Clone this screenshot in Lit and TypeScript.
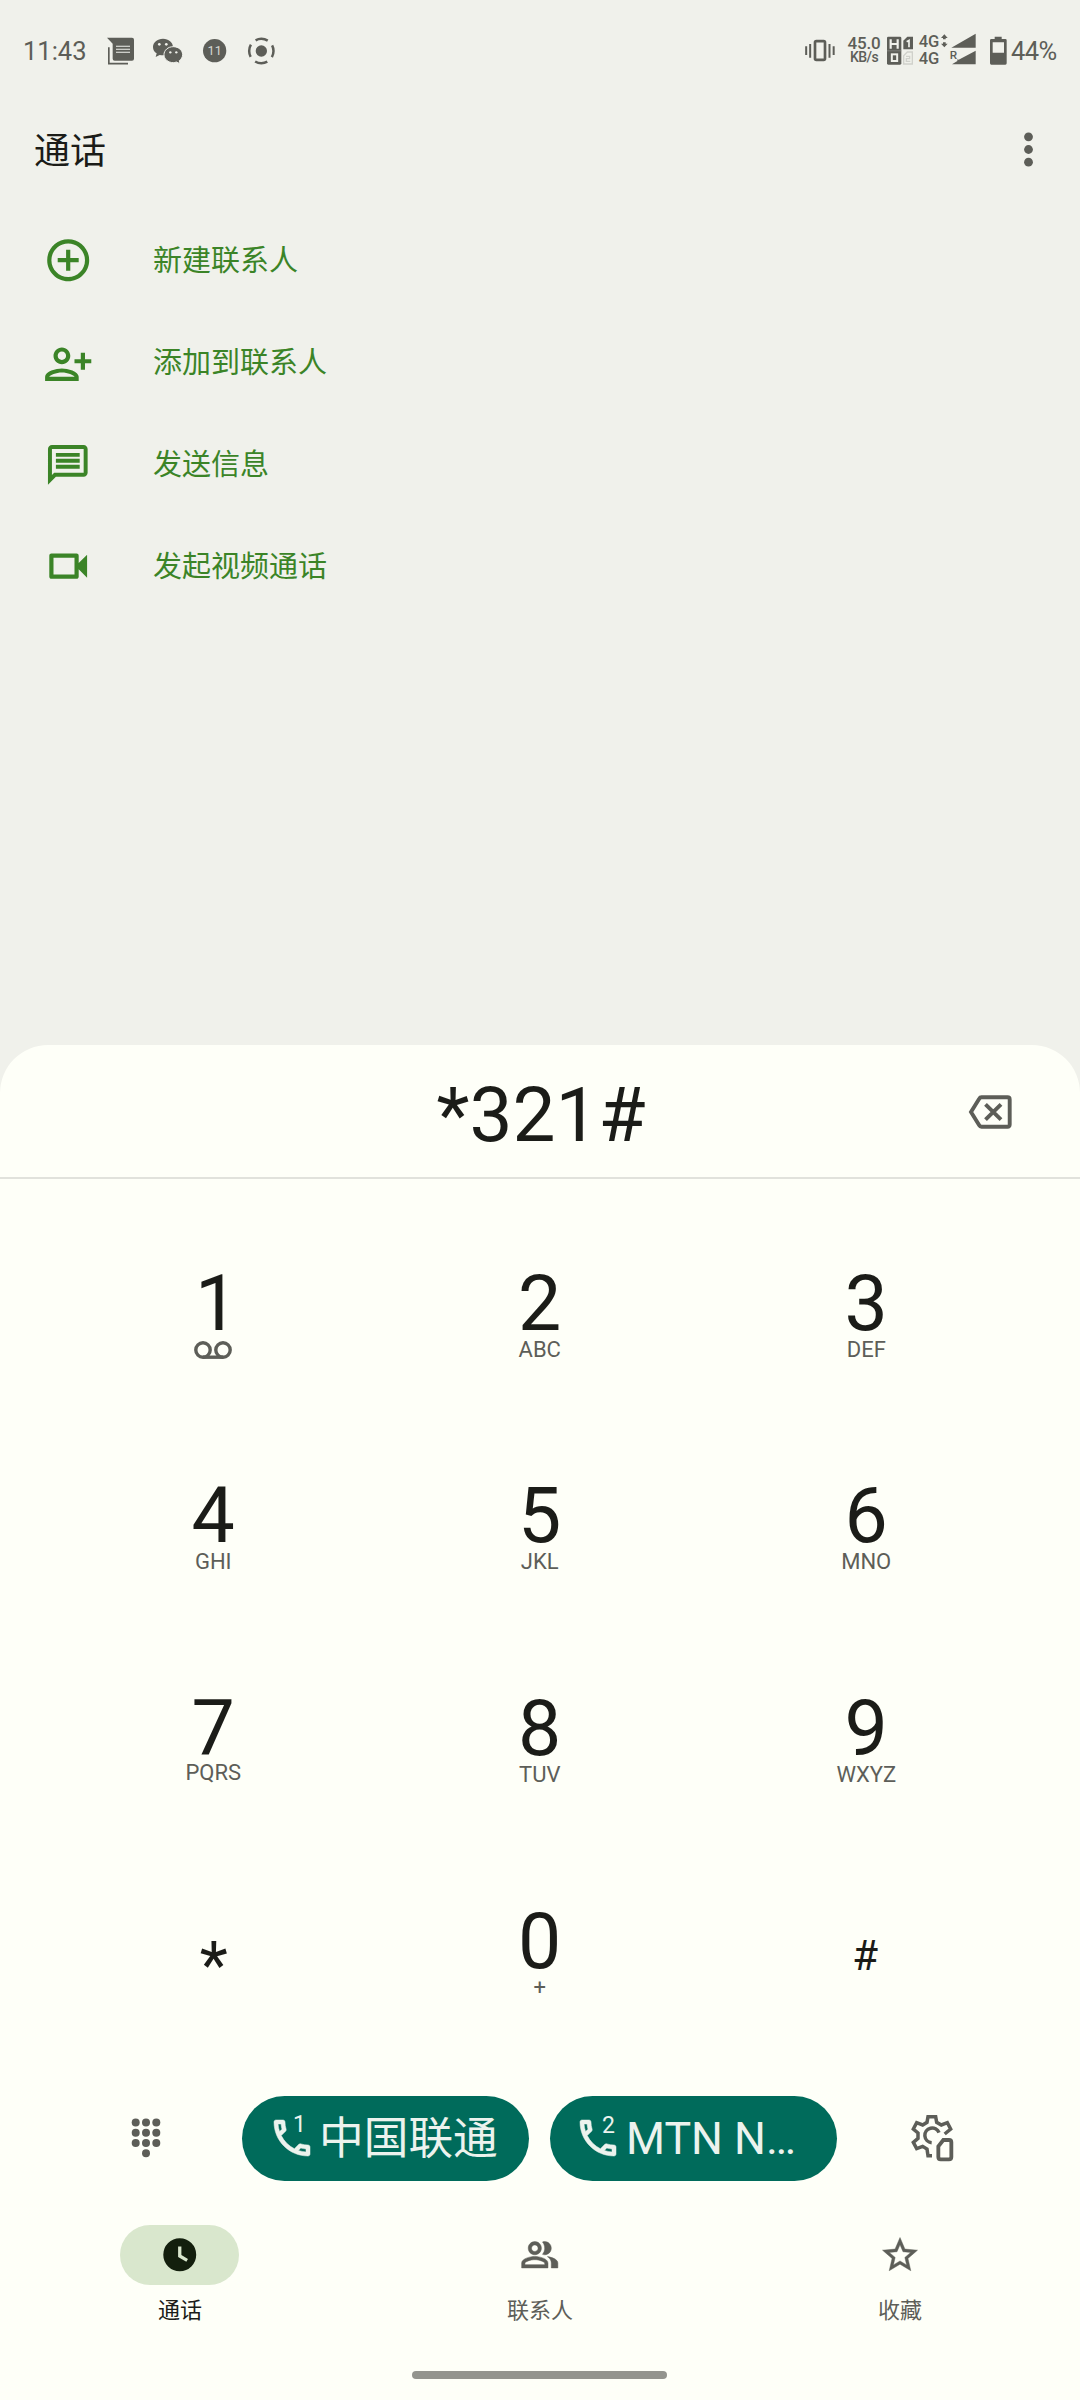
import { LitElement, html, svg, css, nothing, type TemplateResult } from 'lit';
import { customElement, property } from 'lit/decorators.js';

type Glyph = { box: string; body: TemplateResult };

const GLYPHS: Record<string, Glyph> = {
  add: {
    box: '0 0 24 24',
    body: svg`<path d="M13 7h-2v4H7v2h4v4h2v-4h4v-2h-4V7zm-1-5C6.48 2 2 6.48 2 12s4.48 10 10 10 10-4.48 10-10S17.52 2 12 2zm0 18c-4.41 0-8-3.59-8-8s3.59-8 8-8 8 3.59 8 8-3.59 8-8 8z"/>`,
  },
  person: {
    box: '0 0 24 24',
    body: svg`<path d="M13 8c0-2.21-1.79-4-4-4S5 5.79 5 8s1.79 4 4 4 4-1.79 4-4zm-2 0c0 1.1-.9 2-2 2s-2-.9-2-2 .9-2 2-2 2 .9 2 2zM1 18v2h16v-2c0-2.66-5.33-4-8-4s-8 1.34-8 4zm2 0c.2-.71 3.3-2 6-2 2.69 0 5.77 1.28 6 2H3zM20 14.6v-3h3v-2h-3v-3h-2v3h-3v2h3v3z"/>`,
  },
  chat: {
    box: '0 0 24 24',
    body: svg`<path d="M4 4h16v12H5.17L4 17.17V4m0-2c-1.1 0-1.99.9-1.99 2L2 22l4-4h14c1.1 0 2-.9 2-2V4c0-1.1-.9-2-2-2H4zm2 10h12v2H6zm0-3h12v2H6zm0-3h12v2H6z"/>`,
  },
  video: {
    box: '0 0 24 24',
    body: svg`<path d="M15 8v8H5V8h10m1-2H4c-.55 0-1 .45-1 1v10c0 .55.45 1 1 1h12c.55 0 1-.45 1-1v-3.5l4 4v-11l-4 4V7c0-.55-.45-1-1-1z"/>`,
  },
  more: {
    box: '0 0 10 36',
    body: svg`<circle cx="4.5" cy="4.800" r="4.400"/><circle cx="4.5" cy="17.500" r="4.400"/><circle cx="4.5" cy="30.200" r="4.400"/>`,
  },
  backspace: {
    box: '0 0 44 34',
    body: svg`<path d="M13.500 2.300H39.500Q41.700 2.300 41.700 4.500V29.500Q41.700 31.700 39.500 31.700H13.500Q12 31.700 11.200 30.300L3 17L11.200 3.700Q12 2.300 13.500 2.300Z" fill="none" stroke="currentColor" stroke-width="3.900"/><path d="M17.500 9.300L33 24.700M33 9.300L17.500 24.700" fill="none" stroke="currentColor" stroke-width="3.900"/>`,
  },
  voicemail: {
    box: '0 0 38 18',
    body: svg`<g fill="none" stroke="currentColor" stroke-width="3.400"><circle cx="9" cy="9" r="7.200"/><circle cx="29" cy="9" r="7.200"/><path d="M9 16.200H29"/></g>`,
  },
  call: {
    box: '0 0 24 24',
    body: svg`<path stroke="currentColor" stroke-width=".25" d="M6.540 5c.06.890.210 1.760.450 2.590l-1.200 1.200c-.410-1.200-.670-2.470-.760-3.790h1.510m9.860 12.020c.850.240 1.720.390 2.600.450v1.490c-1.320-.090-2.590-.350-3.800-.750l1.200-1.190M7.500 3H4c-.550 0-1 .450-1 1 0 9.390 7.610 17 17 17 .550 0 1-.450 1-1v-3.490c0-.550-.450-1-1-1-1.240 0-2.450-.200-3.570-.570-.100-.040-.210-.050-.310-.050-.260 0-.510.100-.710.290l-2.200 2.200c-2.830-1.450-5.150-3.760-6.590-6.590l2.200-2.200c.280-.280.360-.670.250-1.020C8.700 6.450 8.500 5.250 8.500 4c0-.550-.450-1-1-1z"/>`,
  },
  dialpad: {
    box: '0 0 30 40',
    body: svg`${[4.7, 15, 25.3].map((x) => [4.5, 14.8, 25].map((y) => svg`<circle cx=${x} cy=${y} r="4"/>`))}<circle cx="15" cy="35.200" r="4"/>`,
  },
  simSettings: {
    box: '1110 130 135 150',
    body: svg`<g fill="none" stroke="currentColor" stroke-width="10.500"><path d="M1176 258H1164L1161 238L1148 230L1130 237L1120 218L1134 206V190L1120 178L1130 159L1148 166L1161 158L1164 141H1187L1190 158L1204 166L1222 159L1232 178L1214 193"/><path d="M1197 189A22 22 0 1 0 1175 219"/><path stroke-width="11.500" d="M1210 211H1227Q1234 211 1234 218V262Q1234 269 1227 269H1202Q1195 269 1195 262V230Z"/></g>`,
  },
  clock: {
    box: '0 0 24 24',
    body: svg`<path fill-rule="evenodd" d="M12 2a10 10 0 1 0 0 20a10 10 0 1 0 0-20zM11 7h2v5.200l4 2.400-1 1.700L11 13.300z"/>`,
  },
  people: {
    box: '0 0 24 24',
    body: svg`<path stroke="currentColor" stroke-width=".3" d="M16.670 13.130C18.040 14.060 19 15.320 19 17v3h4v-3c0-2.180-3.570-3.470-6.330-3.870zM15 12c2.210 0 4-1.790 4-4s-1.790-4-4-4c-.470 0-.910.100-1.330.240C14.500 5.270 15 6.580 15 8s-.500 2.730-1.330 3.760c.420.140.860.240 1.330.240zM9 12c2.210 0 4-1.790 4-4s-1.790-4-4-4-4 1.790-4 4 1.790 4 4 4zm0-6c1.100 0 2 .900 2 2s-.900 2-2 2-2-.900-2-2 .900-2 2-2zM9 13c-2.670 0-8 1.340-8 4v3h16v-3c0-2.660-5.330-4-8-4zm6 5H3v-.990C3.200 16.290 6.300 15 9 15s5.800 1.290 6 2v1z"/>`,
  },
  star: {
    box: '0 0 24 24',
    body: svg`<path stroke="currentColor" stroke-width=".25" d="M22 9.240l-7.190-.620L12 2 9.190 8.630 2 9.240l5.460 4.730L5.820 21 12 17.270 18.180 21l-1.630-7.030L22 9.240zM12 15.400l-3.760 2.270 1-4.280-3.320-2.880 4.380-.380L12 6.100l1.710 4.040 4.380.380-3.320 2.880 1 4.280L12 15.400z"/>`,
  },
  news: {
    box: '318 46 90 90',
    body: svg`<path d="M321 51H396Q402 51 402 57V114Q402 120 396 120H344Q338 120 338 114V69Z"/><path d="M326.500 80V129H384" fill="none" stroke="currentColor" stroke-width="5"/><path d="M348 77H390M348 86H390M348 94.500H390" stroke="#f0f1eb" stroke-width="3.200"/>`,
  },
  wechat: {
    box: '455 46 94 90',
    body: svg`<path d="M488 54C471 54 458 65 458 79C458 87 462 94 469 98L466 109L478 103Q483 104 488 104C505 104 518 93 518 79C518 65 505 54 488 54Z"/><path d="M519 78C503 78 491 89 491 102C491 115 503 126 519 126Q524 126 528 124L539 129L537 120C543 116 547 109 547 102C547 89 535 78 519 78Z" stroke="#f0f1eb" stroke-width="3"/><g fill="#f0f1eb"><circle cx="477" cy="71" r="4"/><circle cx="498" cy="71" r="4"/><circle cx="510" cy="95" r="3.500"/><circle cx="528" cy="95" r="3.500"/></g>`,
  },
  eleven: {
    box: '606 46 76 90',
    body: svg`<circle cx="644" cy="90" r="35"/><text x="644" y="104" text-anchor="middle" font-size="38" font-family="Roboto, sans-serif" fill="#d6d7d1">11</text>`,
  },
  record: {
    box: '741 46 87 90',
    body: svg`<circle cx="784" cy="91" r="17"/><circle cx="784" cy="91" r="36.500" fill="none" stroke="currentColor" stroke-width="7.500" stroke-dasharray="38 19.330" stroke-dashoffset="19"/>`,
  },
  vibrate: {
    box: '42 46 96 90',
    body: svg`<rect x="75" y="61.500" width="30" height="56" rx="4" fill="none" stroke="currentColor" stroke-width="8"/><path d="M48.500 77V103M60.500 70V111M118.500 70V111M131 77V103" stroke="currentColor" stroke-width="6"/>`,
  },
  sims: {
    box: '288 46 84 90',
    body: svg`<rect x="291" y="48" width="43" height="84" rx="4"/><path d="M302 56V84M323 56V84M302 70H323" stroke="#f0f1eb" stroke-width="6.500"/><path d="M291 90.500H334" stroke="#8e8f89" stroke-width="2"/><rect x="305.500" y="101" width="16" height="20" fill="none" stroke="#f0f1eb" stroke-width="6"/><path d="M352 48H369V86H340V60Z"/><path d="M350 63L357 59V80" fill="none" stroke="#f0f1eb" stroke-width="5"/><path d="M352 94H367V130H341V105Z" fill="none" stroke="#d0d1cb" stroke-width="4"/><path d="M348 107H359V114H349V122H361" fill="none" stroke="#d0d1cb" stroke-width="4"/>`,
  },
  signal: {
    box: '384 30 176 108',
    body: svg`<g font-family="Roboto, sans-serif" font-weight="500"><text x="386" y="80" font-size="50" textLength="62" lengthAdjust="spacingAndGlyphs">4G</text><text x="386" y="131" font-size="50" textLength="62" lengthAdjust="spacingAndGlyphs">4G</text><text x="479" y="117" font-size="35">R</text></g><path d="M463 43L473 54H467V58H459V54H453ZM463 82L453 71H459V67H467V71H473Z"/><path d="M557 41V83H484ZM557 92V133H486L502 123V118L506 119Z"/>`,
  },
  battery: {
    box: '598 46 56 90',
    body: svg`<path fill-rule="evenodd" d="M615 48H636V55H647Q651 55 651 59V128Q651 132 647 132H605Q601 132 601 128V59Q601 55 605 55H615ZM609 65V96H643V65Z"/>`,
  },
};

@customElement('ui-glyph')
class UiGlyph extends LitElement {
  static styles = css`
    :host { display: inline-flex; flex: none; }
    svg { display: block; width: 100%; height: 100%; fill: currentColor; overflow: visible; }
  `;
  @property() name = 'add';
  render() {
    const g = GLYPHS[this.name];
    return html`<svg viewBox=${g.box}>${g.body}</svg>`;
  }
}

@customElement('dial-key')
class DialKey extends LitElement {
  static styles = css`
    :host { display: flex; flex-direction: column; align-items: center; }
    .digit { font-size: 77px; line-height: 78px; color: #1b1c18; }
    .digit.one { padding-left: 7px; }
    .digit.star { font-size: 65px; line-height: 65px; margin-top: 30.500px; padding-left: 1px; }
    .digit.hash { font-size: 42px; line-height: 42px; margin-top: 32.500px; padding-right: 2px; }
    .letters { font-size: 22px; line-height: 22px; margin-top: -4px; color: #5d5e58; }
    .letters.raised { margin-top: -5.500px; }
    .mail { width: 38px; height: 18px; margin-top: -2px; color: #5d5e58; }
  `;
  @property() digit = '';
  @property() letters = '';
  render() {
    const kinds: Record<string, string> = { '1': 'one', '*': 'star', '#': 'hash' };
    return html`
      <div class="digit ${kinds[this.digit] ?? ''}">${this.digit}</div>
      ${this.digit === '1' ? html`<ui-glyph class="mail" name="voicemail"></ui-glyph>` : nothing}
      ${this.letters ? html`<div class="letters ${this.digit === '7' ? 'raised' : ''}">${this.letters}</div>` : nothing}
    `;
  }
}

const ACTIONS = [
  ['add', '新建联系人'],
  ['person', '添加到联系人'],
  ['chat', '发送信息'],
  ['video', '发起视频通话'],
];

const KEYS = [
  ['1', ''], ['2', 'ABC'], ['3', 'DEF'],
  ['4', 'GHI'], ['5', 'JKL'], ['6', 'MNO'],
  ['7', 'PQRS'], ['8', 'TUV'], ['9', 'WXYZ'],
  ['*', ''], ['0', '+'], ['#', ''],
];

const TABS = [
  ['clock', '通话'],
  ['people', '联系人'],
  ['star', '收藏'],
];

@customElement('app-root')
class AppRoot extends LitElement {
  static styles = css`
    :host {
      display: flex;
      flex-direction: column;
      width: 1080px;
      height: 2400px;
      overflow: hidden;
      background: #f0f1eb;
      color: #5d5e58;
      font-family: Roboto, "Noto Sans CJK SC", sans-serif;
    }
    .status { display: flex; align-items: center; height: 101px; padding: 0 24px 0 23px; font-size: 25.500px; }
    .time { width: 83px; padding-top: 1px; }
    .news { width: 30px; height: 30px; }
    .wechat { width: 31.300px; height: 30px; margin-left: 15.700px; }
    .eleven { width: 25.300px; height: 30px; margin-left: 19px; }
    .record { width: 29px; height: 30px; margin-left: 19.700px; }
    .vibrate { width: 32px; height: 30px; margin-left: auto; }
    .speed { width: 36px; margin: -2px 4px 0 10px; text-align: center; font-weight: 500; }
    .rate { font-size: 17px; line-height: 16px; letter-spacing: -0.200px; }
    .unit { font-size: 14px; line-height: 13px; letter-spacing: -0.600px; }
    .sims { width: 28px; height: 30px; }
    .signal { width: 58.700px; height: 36px; margin: -4.600px 12.600px 0 4px; }
    .battery { width: 18.700px; height: 30px; margin-right: 3px; }
    .percent { width: 45px; font-size: 25.500px; letter-spacing: -0.600px; padding-top: 1px; }

    .title { display: flex; align-items: center; justify-content: space-between; height: 98px; padding: 0 46px 0 34px; }
    .title h1 { margin: 3px 0 0; font-size: 36px; line-height: 40px; font-weight: 400; color: #1b1c18; }
    .more { width: 10px; height: 36px; }

    .actions { display: flex; flex-direction: column; margin-top: 10px; color: #3b8427; }
    .action { display: flex; align-items: center; height: 102px; padding-left: 43px; font-size: 29px; line-height: 34px; }
    .action ui-glyph { width: 50.400px; height: 50.400px; margin-right: 59.600px; }
    .action span { margin-top: 2px; }
    .action .person { margin-top: 4px; }
    .action .chat { width: 47.600px; height: 47.600px; margin: 2px 61px 0 1.400px; }

    .sheet { display: flex; flex-direction: column; flex: none; height: 1355px; margin-top: auto; border-radius: 48px 48px 0 0; background: #fefff8; }
    .entry { display: grid; grid-template-columns: 1fr 240px 1fr; align-items: center; height: 134px; box-sizing: border-box; border-bottom: 2px solid #e1e2dc; }
    .number { font-size: 76.500px; line-height: 80px; margin-top: 8px; padding-left: 2px; text-align: center; color: #1b1c18; }
    .erase { grid-column: 3; justify-self: end; width: 44px; height: 34px; margin: 1px 68px 0 0; }
    .keys { display: grid; grid-template-columns: repeat(3, 326.500px); grid-template-rows: repeat(3, 212.700px) 193.400px; padding: 85.500px 50px 0; }

    .calls { display: flex; align-items: center; height: 85px; padding: 0 125px 0 130.500px; }
    .pad { width: 30px; height: 40px; margin-right: 81.500px; }
    .call { display: flex; align-items: center; box-sizing: border-box; width: 287px; height: 85px; border-radius: 43px; background: #006b5b; color: #ecf3ee; padding-left: 26px; }
    .call + .call { margin-left: 21px; padding-left: 24px; }
    .handset { width: 48px; height: 48px; }
    .slot { font-size: 23px; line-height: 24px; margin: -26px 0 0 -23px; width: 13px; }
    .call + .call .slot { margin-left: -20px; margin-top: -24px; }
    .carrier { font-size: 44.700px; line-height: 56px; margin: 1px 0 0 13px; white-space: nowrap; }
    .call + .call .carrier { margin-left: 11px; }
    .gear { width: 45px; height: 50px; margin-left: auto; }

    .tabs { display: grid; grid-template-columns: repeat(3, 360px); margin-top: 44px; }
    .tab { display: flex; flex-direction: column; align-items: center; font-size: 22px; }
    .tab.on { color: #1b1c18; }
    .pill { display: flex; align-items: center; justify-content: center; width: 119px; height: 60px; margin-right: 1px; border-radius: 30px; }
    .on .pill { background: #d9e7cd; color: #131f0d; }
    .pill ui-glyph { width: 39.500px; height: 39.500px; }
    .pill .star { width: 42px; height: 42px; }
    .label { margin-top: 13px; line-height: 26px; }
    .home { width: 255px; height: 8px; margin: auto auto 21px 412px; border-radius: 4px; background: #93948e; }
  `;

  render() {
    const g = (name: string, cls = name) => html`<ui-glyph class=${cls} name=${name}></ui-glyph>`;
    return html`
      <div class="status">
        <span class="time">11:43</span>
        ${g('news')}${g('wechat')}${g('eleven')}${g('record')}${g('vibrate')}
        <div class="speed"><div class="rate">45.0</div><div class="unit">KB/s</div></div>
        ${g('sims')}${g('signal')}${g('battery')}
        <span class="percent">44%</span>
      </div>
      <div class="title"><h1>通话</h1>${g('more')}</div>
      <div class="actions">
        ${ACTIONS.map(([icon, label]) => html`<div class="action">${g(icon)}<span>${label}</span></div>`)}
      </div>
      <div class="sheet">
        <div class="entry"><span></span><div class="number">*321#</div>${g('backspace', 'erase')}</div>
        <div class="keys">
          ${KEYS.map(([d, l]) => html`<dial-key .digit=${d} .letters=${l}></dial-key>`)}
        </div>
        <div class="calls">
          ${g('dialpad', 'pad')}
          ${[['1', '中国联通'], ['2', 'MTN N…']].map(([slot, name]) => html`
            <div class="call">${g('call', 'handset')}<span class="slot">${slot}</span><span class="carrier">${name}</span></div>`)}
          ${g('simSettings', 'gear')}
        </div>
        <div class="tabs">
          ${TABS.map(([icon, label], i) => html`
            <div class="tab ${i === 0 ? 'on' : ''}"><div class="pill">${g(icon)}</div><div class="label">${label}</div></div>`)}
        </div>
        <div class="home"></div>
      </div>
    `;
  }
}
